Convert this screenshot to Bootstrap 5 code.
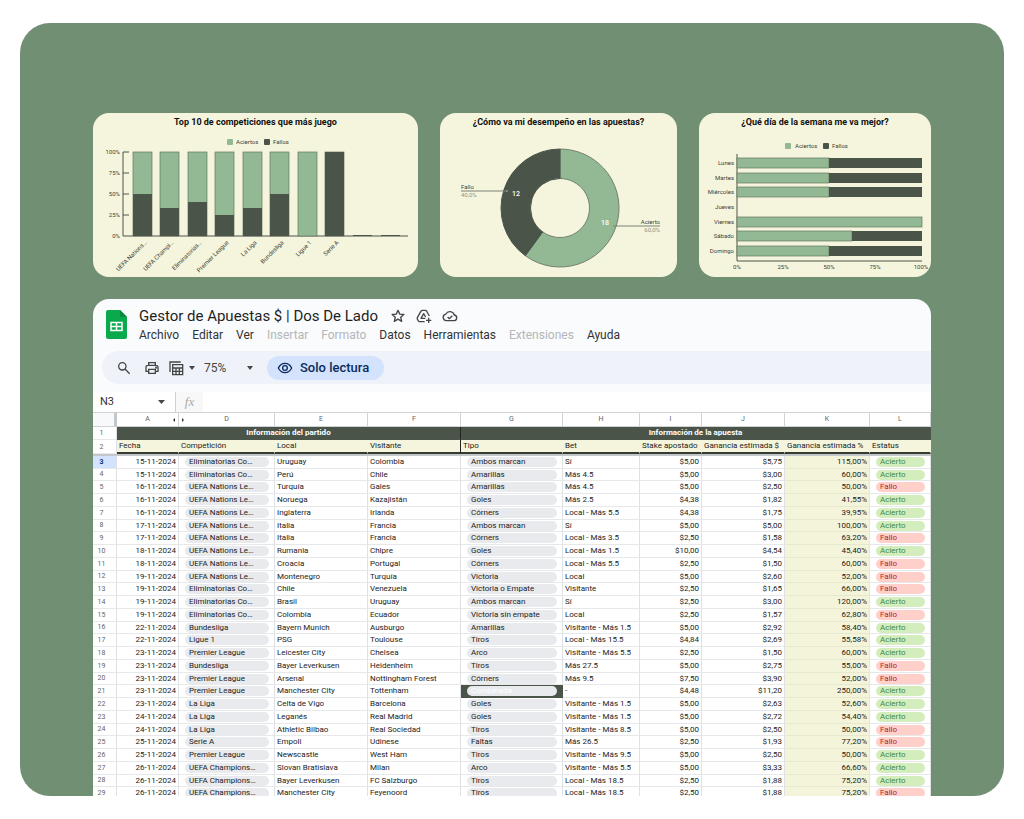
<!DOCTYPE html>
<html lang="es">
<head>
<meta charset="utf-8">
<meta name="viewport" content="width=device-width, initial-scale=1">
<title>Gestor de Apuestas $ | Dos De Lado</title>
<link href="https://cdn.jsdelivr.net/npm/bootstrap@5.3.0/dist/css/bootstrap.min.css" rel="stylesheet">
<style>
:root { --moss:#718f73; --cream:#f5f5dd; --mint:#93b994; --pine:#4a5448; }
body { font-family:Roboto,"Liberation Sans",sans-serif; background:#fff; color:#202124; }
.stage { height:100vh; padding:23px 20px; }
.panel { background:var(--moss); border-radius:30px; padding:90px 73px 0; }
.charts { display:grid; grid-template-columns:325fr 237fr 232fr; gap:22px; }
.chart-card { background:var(--cream); border-radius:16px; }
.chart-card h2 { font-size:9px; line-height:18px; font-weight:700; color:#111; }
.chart-card svg { display:block; width:100%; }
.chart-card text { font-size:6px; fill:#3c3f38; }
.chart-card .muted { fill:#8f9187; }
.chart-card .inring { fill:#fff; font-weight:500; font-size:7px; }
.sheet { background:#f9fbfd; border-radius:16px 16px 0 0; margin-top:22px; }
.brand { padding:7px 0 0 13px; gap:12px; }
.brand h1 { font-size:15px; line-height:20px; color:#1f1f1f; font-family:Roboto,sans-serif; }
.title-row { gap:12px; }
.title-icons { gap:10px; }
.menus { gap:13px; }
.menus button, .tools button { font-size:12px; line-height:18px; color:#333; border:0; padding:0; background:none; }
.menus button:disabled { color:#b4b6b8; }
.tools { background:#eff3f9; margin:7px 0 8px 9px; height:33px; padding-left:14px; }
.tools button.view-only { background:#d3e3fd; color:#0b2a5c; font-size:13px; font-weight:500; height:24px; padding:0 15px 0 10px; margin-left:13px; gap:7px; }
.tools button.zoom { color:#444746; width:50px; }
.formula { background:#fff; height:20px; }
.formula input { border:0; width:62px; padding:0 0 0 7px; font-size:11px; line-height:20px; color:#333; outline:0; background:none; }
.fx-mark { width:28px; background:#f8f8f8; color:#aaa; font:italic 13px/20px "Liberation Serif",serif; border-left:1px solid #d0d0d0; }
.grid-table { table-layout:fixed; width:100%; border-collapse:separate; border-spacing:0; background:#fff; font-size:8px; line-height:12px; color:#222; }
.grid-table th, .grid-table td { padding:0 2px; white-space:nowrap; overflow:hidden; border-right:1px solid #dfe1e4; border-bottom:1px solid #e6e8ea; font-weight:400; height:13px; }
.grid-table tbody tr:nth-child(4n+2) > * { height:12px; line-height:11px; }
.grid-table .letters th { height:15px; font-size:7px; line-height:13px; color:#5f6368; text-align:center; border-top:1px solid #dadce0; border-color:#d0d3d6; }
.grid-table .letters th:first-child { background:#f8f9fa; border-right:3px solid #c4c7c9; }
.grid-table th.num { font-size:7px; text-align:center; color:#5f6368; padding:0 6px 0 0; }
.grid-table .picked th.num { background:#d3e3fd; color:#0b3a80; font-weight:700; }
.grid-table .band th.group { background:var(--pine); color:#fff; font-weight:700; text-align:center; border-color:var(--pine); }
.grid-table .heads th { height:14px; }
.grid-table .heads th.field { background:var(--cream); border-right-color:var(--cream); border-bottom:2px solid #333b32; line-height:12px; }
.grid-table .band th.split, .grid-table .heads th.split { border-right:1px solid #222; }
.grid-table .frozen td { height:2px; background:#c4c7c9; border:0; padding:0; }
.grid-table td.rate { background:#f3f4da; border-color:#e7e8cd; }
.grid-table td.tagcell { padding:0 5px 0 6px; }
.tag { display:block; border-radius:5px; line-height:10px; height:10px; padding-left:4px; background:#e8eaed; overflow:hidden; }
.tag.hit { background:#d4edbc; color:#3c8a4e; }
.tag.miss { background:#ffcfc9; color:#b3262c; }
.grid-table td.dark { background:var(--pine); border-color:var(--pine); }
.dark .tag { color:#fff; }
</style>
</head>
<body>
<div class="stage">
<main class="panel h-100 overflow-hidden">
  <section class="charts">
    <article class="chart-card overflow-hidden">
      <h2 class="m-0 text-center">Top 10 de competiciones que más juego</h2>
      <svg id="byLeague" viewBox="0 0 325 146" role="img" aria-label="Aciertos y fallos por competición">
        <rect x="134" y="8" width="6" height="6" rx="1" fill="#93b994"/><text x="143" y="13">Aciertos</text>
        <rect x="171" y="8" width="6" height="6" rx="1" fill="#4a5448"/><text x="180" y="13">Fallos</text>
        <path d="M36 21H30V105H315M30 42h6M30 63h6M30 84h6" fill="none" stroke="#4f554b"/>
        <g text-anchor="end"><text x="27" y="23">100%</text><text x="27" y="44">75%</text><text x="27" y="65">50%</text><text x="27" y="86">25%</text><text x="27" y="107">0%</text></g>
      </svg>
    </article>
    <article class="chart-card overflow-hidden">
      <h2 class="m-0 text-center">¿Cómo va mi desempeño en las apuestas?</h2>
      <svg viewBox="0 0 237 146" role="img" aria-label="Aciertos 60 %, fallos 40 %">
        <path d="M120 18A59 59 0 1 1 85.300 124.700L102.700 100.900A29.500 29.500 0 1 0 120 47.500Z" fill="#93b994" stroke="#71806b"/>
        <path d="M120 18A59 59 0 0 0 85.300 124.700L102.700 100.900A29.500 29.500 0 0 1 120 47.500Z" fill="#4a5448" stroke="#4a5448"/>
        <path d="M21 60H67M173 95H220" stroke="#7d8178"/>
        <circle cx="67" cy="60" r="1" fill="#8d9188"/>
        <text x="21" y="58">Fallo</text><text class="muted" x="21" y="66">40,0%</text>
        <text x="220" y="93" text-anchor="end">Acierto</text><text class="muted" x="220" y="101" text-anchor="end">60,0%</text>
        <text class="inring" x="76" y="65" text-anchor="middle">12</text><text class="inring" x="165" y="94" text-anchor="middle">18</text>
      </svg>
    </article>
    <article class="chart-card overflow-hidden">
      <h2 class="m-0 text-center">¿Qué día de la semana me va mejor?</h2>
      <svg id="byDay" viewBox="0 0 232 146" role="img" aria-label="Aciertos y fallos por día">
        <rect x="86" y="12" width="6" height="6" rx="1" fill="#93b994"/><text x="96" y="17">Aciertos</text>
        <rect x="124" y="12" width="6" height="6" rx="1" fill="#4a5448"/><text x="133" y="17">Fallos</text>
        <path d="M38 23V130H223" fill="none" stroke="#4f554b"/>
        <g text-anchor="middle"><text x="38" y="138">0%</text><text x="84" y="138">25%</text><text x="130" y="138">50%</text><text x="176" y="138">75%</text><text x="222" y="138">100%</text></g>
      </svg>
    </article>
  </section>

  <section class="sheet overflow-hidden">
    <header class="brand d-flex">
      <svg class="mt-1" width="21" height="29" viewBox="0 0 21 29" aria-hidden="true">
        <path d="M2 0H14L21 7V27a2 2 0 0 1-2 2H2a2 2 0 0 1-2-2V2a2 2 0 0 1 2-2Z" fill="#0ba94e"/>
        <path d="M14 0L21 7H15a1 1 0 0 1-1-1Z" fill="#078a3c"/>
        <path d="M5 12.500H16V20.500H5ZM5 16.500H16M10.500 12.500V20.500" fill="none" stroke="#fff" stroke-width="1.500"/>
      </svg>
      <div>
        <div class="d-flex align-items-center title-row">
          <h1 class="m-0 fw-normal">Gestor de Apuestas $ | Dos De Lado</h1>
          <div class="d-flex align-items-center title-icons">
            <svg width="16" height="16" viewBox="0 0 24 24" fill="none" stroke="#444746" stroke-width="2" stroke-linejoin="round" aria-hidden="true"><path d="M12 3.500l2.600 5.700 6.200.6-4.700 4.100 1.400 6.100-5.500-3.200-5.500 3.200 1.400-6.100-4.700-4.100 6.200-.6Z"/></svg>
            <svg width="16" height="16" viewBox="0 0 24 24" fill="none" stroke="#444746" stroke-width="2" stroke-linejoin="round" aria-hidden="true"><path d="M13 20.500H5.500Q4 20.500 3.300 19L2 16.500Q1.500 15.500 2 14.500L7.500 4.800Q8.300 3.500 9.800 3.500h3.900q1.500 0 2.300 1.300L20 12M14 15.500H7.500L11.500 8.500 14.500 13.500M19 14.500v8M15 18.500h8"/></svg>
            <svg width="16" height="16" viewBox="0 0 24 24" fill="none" stroke="#444746" stroke-width="2" stroke-linejoin="round" aria-hidden="true"><path d="M6.500 19a5 5 0 0 1-.7-9.900 6.700 6.700 0 0 1 12.500 1.400A4.300 4.300 0 0 1 18.500 19ZM8.500 13.500l2.500 2.500 4.500-4.500"/></svg>
          </div>
        </div>
        <nav class="menus d-flex" aria-label="Menú">
          <button type="button">Archivo</button><button type="button">Editar</button><button type="button">Ver</button><button type="button" disabled>Insertar</button><button type="button" disabled>Formato</button><button type="button">Datos</button><button type="button">Herramientas</button><button type="button" disabled>Extensiones</button><button type="button">Ayuda</button>
        </nav>
      </div>
    </header>
    <div class="tools d-flex align-items-center rounded-start-pill">
      <button type="button" class="d-flex" aria-label="Buscar"><svg width="16" height="16" viewBox="0 0 24 24" fill="none" stroke="#444746" stroke-width="2"><circle cx="9.500" cy="9.500" r="5.500"/><path d="M13.500 13.500L20.500 20.500"/></svg></button>
      <button type="button" class="d-flex ms-2 ps-1" aria-label="Imprimir"><svg width="16" height="16" viewBox="0 0 24 24" fill="none" stroke="#444746" stroke-width="2"><path d="M7 8V4h10v4M6.500 17H3v-6q0-3 3-3h12q3 0 3 3v6h-3.500M7 14h10v6H7Z"/><circle cx="18" cy="11.500" r=".6"/></svg></button>
      <button type="button" class="d-flex align-items-center ms-2 gap-1" aria-label="Vistas de filtro"><svg width="16" height="16" viewBox="0 0 24 24" fill="none" stroke="#444746" stroke-width="2"><path d="M3 18V3H19M7 7H22V22H7ZM7 12H22M7 17H22M12 12V22M17 12V22"/></svg><svg width="8" height="8" viewBox="0 0 8 8"><path d="M1 2h6L4 6Z" fill="#444746"/></svg></button>
      <button type="button" class="zoom d-flex align-items-center justify-content-between ms-2">75%<svg width="8" height="8" viewBox="0 0 8 8"><path d="M1 2h6L4 6Z" fill="#444746"/></svg></button>
      <button type="button" class="view-only d-flex align-items-center rounded-pill"><svg width="16" height="16" viewBox="0 0 24 24" fill="none" stroke="#0b2a5c" stroke-width="2"><path d="M2 12Q5.500 5 12 5t10 7q-3.500 7-10 7T2 12Z"/><circle cx="12" cy="12" r="3.500"/></svg>Solo lectura</button>
    </div>
    <div class="formula d-flex align-items-center">
      <input type="text" value="N3" aria-label="Cuadro de nombres">
      <svg class="me-2" width="12" height="8" viewBox="0 0 12 8" aria-hidden="true"><path d="M3 2h7L6.500 6Z" fill="#444746"/></svg>
      <span class="fx-mark text-center">fx</span>
    </div>
    <table class="grid-table">
      <colgroup><col style="width:24px"><col style="width:62px"><col style="width:96px"><col style="width:93px"><col style="width:93px"><col style="width:102px"><col style="width:77px"><col style="width:62px"><col style="width:83px"><col style="width:85px"><col style="width:61px"></colgroup>
      <thead>
        <tr class="letters"><th></th>
          <th><span class="d-flex align-items-center"><span class="flex-fill ps-1">A</span><svg width="4" height="4" viewBox="0 0 4 4"><path d="M3 0v4L1 2Z" fill="#333"/></svg></span></th>
          <th><span class="d-flex align-items-center"><svg width="4" height="4" viewBox="0 0 4 4"><path d="M1 0v4L3 2Z" fill="#333"/></svg><span class="flex-fill pe-1">D</span></span></th>
          <th>E</th><th>F</th><th>G</th><th>H</th><th>I</th><th>J</th><th>K</th><th>L</th></tr>
        <tr class="band"><th class="num">1</th><th class="group split" colspan="4">Información del partido</th><th class="group" colspan="6">Información de la apuesta</th></tr>
        <tr class="heads"><th class="num">2</th><th class="field">Fecha</th><th class="field">Competición</th><th class="field">Local</th><th class="field split">Visitante</th><th class="field">Tipo</th><th class="field">Bet</th><th class="field">Stake apostado</th><th class="field">Ganancia estimada $</th><th class="field">Ganancia estimada %</th><th class="field">Estatus</th></tr>
        <tr class="frozen"><td colspan="11"></td></tr>
      </thead>
      <tbody id="bets"></tbody>
    </table>
  </section>
</main>
</div>
<script>
const bets = `15|Eliminatorias Co…|Uruguay|Colombia|Ambos marcan|Sí|5,00|5,75|115,00|1
15|Eliminatorias Co…|Perú|Chile|Amarillas|Más 4.5|5,00|3,00|60,00|1
16|UEFA Nations Le…|Turquía|Gales|Amarillas|Más 4.5|5,00|2,50|50,00|0
16|UEFA Nations Le…|Noruega|Kazajistán|Goles|Más 2.5|4,38|1,82|41,55|1
16|UEFA Nations Le…|Inglaterra|Irlanda|Córners|Local - Más 5.5|4,38|1,75|39,95|1
17|UEFA Nations Le…|Italia|Francia|Ambos marcan|Sí|5,00|5,00|100,00|1
17|UEFA Nations Le…|Italia|Francia|Córners|Local - Más 3.5|2,50|1,58|63,20|0
18|UEFA Nations Le…|Rumania|Chipre|Goles|Local - Más 1.5|10,00|4,54|45,40|1
18|UEFA Nations Le…|Croacia|Portugal|Córners|Local - Más 5.5|2,50|1,50|60,00|0
19|UEFA Nations Le…|Montenegro|Turquía|Victoria|Local|5,00|2,60|52,00|0
19|Eliminatorias Co…|Chile|Venezuela|Victoria o Empate|Visitante|2,50|1,65|66,00|0
19|Eliminatorias Co…|Brasil|Uruguay|Ambos marcan|Sí|2,50|3,00|120,00|1
19|Eliminatorias Co…|Colombia|Ecuador|Victoria sin empate|Local|2,50|1,57|62,80|0
22|Bundesliga|Bayern Munich|Ausburgo|Amarillas|Visitante - Más 1.5|5,00|2,92|58,40|1
22|Ligue 1|PSG|Toulouse|Tiros|Local - Más 15.5|4,84|2,69|55,58|1
23|Premier League|Leicester City|Chelsea|Arco|Visitante - Más 5.5|2,50|1,50|60,00|1
23|Bundesliga|Bayer Leverkusen|Heidenheim|Tiros|Más 27.5|5,00|2,75|55,00|0
23|Premier League|Arsenal|Nottingham Forest|Córners|Más 9.5|7,50|3,90|52,00|0
23|Premier League|Manchester City|Tottenham|Combinada|-|4,48|11,20|250,00|1
23|La Liga|Celta de Vigo|Barcelona|Goles|Visitante - Más 1.5|5,00|2,63|52,60|1
24|La Liga|Leganés|Real Madrid|Goles|Visitante - Más 1.5|5,00|2,72|54,40|1
24|La Liga|Athletic Bilbao|Real Sociedad|Tiros|Visitante - Más 8.5|5,00|2,50|50,00|0
25|Serie A|Empoli|Udinese|Faltas|Más 26.5|2,50|1,93|77,20|0
25|Premier League|Newscastle|West Ham|Tiros|Visitante - Más 9.5|5,00|2,50|50,00|1
26|UEFA Champions…|Slovan Bratislava|Milan|Arco|Visitante - Más 5.5|5,00|3,33|66,60|1
26|UEFA Champions…|Bayer Leverkusen|FC Salzburgo|Tiros|Local - Más 18.5|2,50|1,88|75,20|1
26|UEFA Champions…|Manchester City|Feyenoord|Tiros|Local - Más 18.5|2,50|1,88|75,20|0`.split("\n").map(r => r.split("|"));
document.getElementById("bets").innerHTML = bets.map((b, i) => `<tr${i ? "" : ' class="picked"'}><th class="num" scope="row">${i + 3}</th>
<td class="text-end">${b[0]}-11-2024</td><td class="tagcell"><span class="tag">${b[1]}</span></td><td>${b[2]}</td><td>${b[3]}</td>
<td class="tagcell${b[4] === "Combinada" ? " dark" : ""}"><span class="tag">${b[4]}</span></td><td>${b[5]}</td>
<td class="text-end">$${b[6]}</td><td class="text-end">$${b[7]}</td><td class="text-end rate">${b[8]}%</td>
<td class="tagcell"><span class="tag ${b[9] === "1" ? "hit" : "miss"}">${b[9] === "1" ? "Acierto" : "Fallo"}</span></td></tr>`).join("");

const leagues = [["UEFA Nations…", 50], ["UEFA Champi…", 33], ["Eliminatorias…", 40], ["Premier League", 25], ["La Liga", 33], ["Bundesliga", 50], ["Ligue 1", 0], ["Serie A", 100]];
let out = "";
leagues.forEach(([name, miss], i) => {
  const x = 40 + Math.floor(i * 27.5), h = Math.round(miss * 84 / 100);
  out += `<rect x="${x}" y="21" width="19" height="84" fill="#93b994" stroke="#66775f" stroke-width=".7"/>`;
  if (h) out += `<rect x="${x}" y="${105 - h}" width="19" height="${h}" fill="#4a5448"/>`;
  out += `<text transform="translate(${x + 14} 112) rotate(-45)" text-anchor="end">${name}</text>`;
});
out += '<path d="M260 104.500h19M288 104.500h19" stroke="#4a5448"/>';
document.getElementById("byLeague").insertAdjacentHTML("beforeend", out);

const days = [["Lunes", 50], ["Martes", 50], ["Miércoles", 50], ["Jueves", null], ["Viernes", 100], ["Sábado", 62.5], ["Domingo", 50]];
out = "";
days.forEach(([name, hit], i) => {
  const y = 27 + Math.round(i * 14.67);
  out += `<text x="35" y="${y + 7}" text-anchor="end">${name}</text>`;
  if (hit === null) return;
  const w = Math.floor(hit * 185 / 100);
  out += `<rect x="38" y="${y}" width="${w}" height="10" fill="#93b994" stroke="#66775f" stroke-width=".7"/>`;
  if (w < 185) out += `<rect x="${38 + w}" y="${y}" width="${185 - w}" height="10" fill="#4a5448"/>`;
});
document.getElementById("byDay").insertAdjacentHTML("beforeend", out);
</script>
<script src="https://cdn.jsdelivr.net/npm/bootstrap@5.3.0/dist/js/bootstrap.bundle.min.js"></script>
</body>
</html>
